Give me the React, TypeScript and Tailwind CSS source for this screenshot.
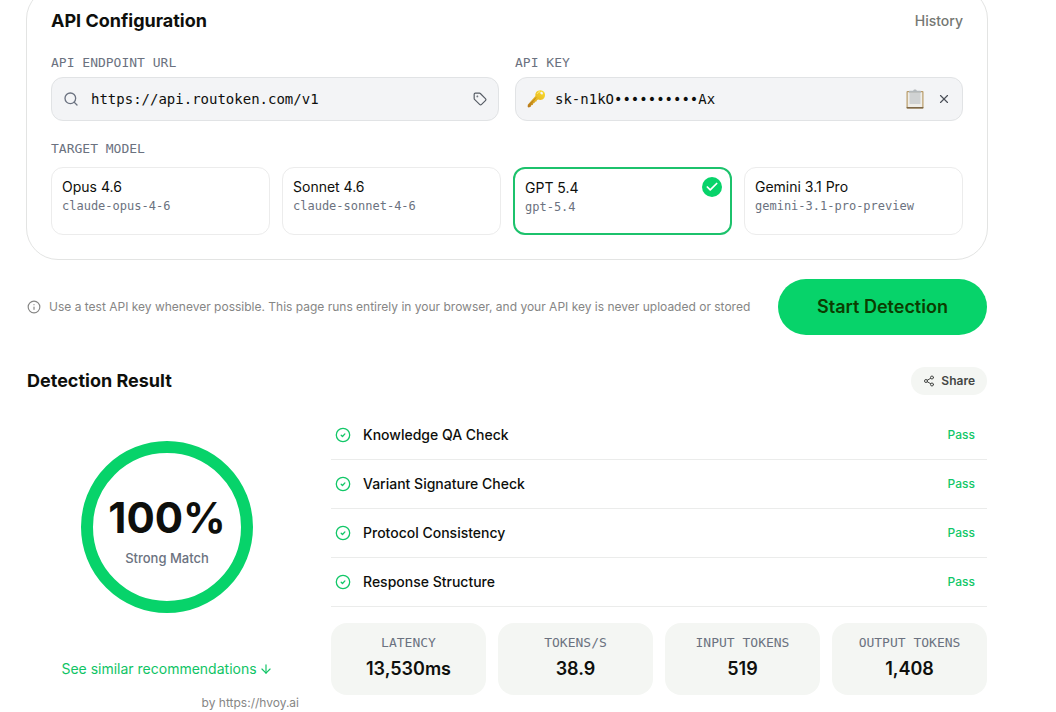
import { ArrowDown, Check, Info, Search, Share2, Tag, X } from 'lucide-react';

interface Model {
    id: string;
    name: string;
}

const models: Model[] = [
    { id: 'claude-opus-4-6', name: 'Opus 4.6' },
    { id: 'claude-sonnet-4-6', name: 'Sonnet 4.6' },
    { id: 'gpt-5.4', name: 'GPT 5.4' },
    { id: 'gemini-3.1-pro-preview', name: 'Gemini 3.1 Pro' },
];

const checks = ['Knowledge QA Check', 'Variant Signature Check', 'Protocol Consistency', 'Response Structure'];

const stats = [
    { label: 'LATENCY', value: '13,530ms' },
    { label: 'TOKENS/S', value: '38.9' },
    { label: 'INPUT TOKENS', value: '519' },
    { label: 'OUTPUT TOKENS', value: '1,408' },
];

const mono = "font-['DejaVu_Sans_Mono',monospace]";
const labelClass = `${mono} text-[13px] leading-4 text-[#6b7280]`;
const fieldClass = 'mt-1.5 flex h-11 items-center rounded-xl border border-[#e1e3e5] bg-[#f3f4f6] px-[11px]';
const inputClass = `${mono} min-w-0 flex-1 bg-transparent text-sm text-[#0e0f0c] outline-none`;

function KeyIcon() {
    return (
        <svg className="h-5 w-5 shrink-0" viewBox="0 0 20 20" aria-hidden="true">
            <defs>
                <linearGradient id="key" x1="0.9" y1="0" x2="0.1" y2="1">
                    <stop offset="0" stopColor="#f9dc2b" />
                    <stop offset="0.5" stopColor="#e8b923" />
                    <stop offset="1" stopColor="#b97a1c" />
                </linearGradient>
            </defs>
            <path
                fill="url(#key)"
                fillRule="evenodd"
                d="M9.300 3.100c1.500-2 4.600-2.600 6.700-1.200 2.200 1.400 2.700 4.500 1.300 6.800-1.300 2-3.700 2.800-6 1.900l-1.300.3-.6 1.500-1.400.3-.5 1.400-1.400.3-.3 1.500-1.600.4-.5 1.500-2 .8-1-.6.1-2.300 7.600-8.600c-.2-1.500.1-2.900.9-4Zm4.900-.3c-.9.2-1.200 1.300-.6 2 .6.8 1.800.9 2.200.1.500-1-.4-2.300-1.600-2.100Z"
            />
            <path d="M9.100 8.400 1.700 16.900" stroke="#b57c1a" strokeWidth="0.8" />
            <path d="M10.200 4.700c.6-1.300 1.600-1.900 2.700-1.900" fill="none" stroke="#fff3a0" strokeWidth="0.9" />
        </svg>
    );
}

function ClipboardIcon() {
    return (
        <svg className="h-5 w-5" viewBox="0 0 20 20" aria-hidden="true">
            <rect x="1.500" y="2" width="17" height="17.500" rx="1" fill="#b99b68" />
            <rect x="1.500" y="18" width="17" height="1.500" rx="0.700" fill="#7d6748" />
            <rect x="2.700" y="3.200" width="14.600" height="14.800" fill="#efede8" />
            <path d="M4.500 4h11v11h-11z" fill="#d0d2d3" />
            <path d="M4 3.800V2.400c0-.3.300-.6.600-.6h3.500C8.400 1 9.100.6 10 .6s1.600.4 1.900 1.200h3.500c.3 0 .6.300.6.600v1.400H4Z" fill="#b3b8bb" />
        </svg>
    );
}

function PassIcon() {
    return (
        <svg
            className="mr-3 h-4 w-4 shrink-0 text-[#12c768]"
            viewBox="0 0 16 16"
            fill="none"
            stroke="currentColor"
            strokeWidth="1.3"
            strokeLinecap="round"
            strokeLinejoin="round"
            aria-hidden="true"
        >
            <circle cx="8" cy="8" r="6.700" />
            <path d="m6.200 8.200 1.300 1.300 2.400-2.600" />
        </svg>
    );
}

export default function App() {
    return (
        <main className="-mt-[13px] bg-white pr-[68px] pl-[26px] font-['Inter',sans-serif] text-[#0e0f0c]">
            <section className="rounded-[32px] border border-[#e3e4e3] p-6 pt-[21px]">
                <div className="flex h-6 items-center justify-between">
                    <h2 className="text-lg font-bold">API Configuration</h2>
                    <button type="button" className="text-sm font-medium text-[#757873]">
                        History
                    </button>
                </div>

                <div className="mt-[22px] grid grid-cols-2 gap-4">
                    <div>
                        <label htmlFor="endpoint" className={`${labelClass} block`}>
                            API ENDPOINT URL
                        </label>
                        <div className={fieldClass}>
                            <Search className="mr-3 h-4 w-4 shrink-0 text-[#6b7280]" strokeWidth={2} />
                            <input id="endpoint" type="text" defaultValue="https://api.routoken.com/v1" className={inputClass} />
                            <button type="button" aria-label="Presets" className="text-[#555b64]">
                                <Tag className="h-3.5 w-3.5" strokeWidth={2} />
                            </button>
                        </div>
                    </div>
                    <div>
                        <label htmlFor="apikey" className={`${labelClass} block`}>
                            API KEY
                        </label>
                        <div className={fieldClass}>
                            <span className="mr-2">
                                <KeyIcon />
                            </span>
                            <input id="apikey" type="text" defaultValue="sk-n1kO••••••••••Ax" className={inputClass} />
                            <button type="button" aria-label="Paste key">
                                <ClipboardIcon />
                            </button>
                            <button type="button" aria-label="Clear key" className="ml-3 text-[#4b5058]">
                                <X className="h-3.5 w-3.5" strokeWidth={2} />
                            </button>
                        </div>
                    </div>
                </div>

                <p className={`${labelClass} mt-5`}>TARGET MODEL</p>
                <div className="mt-2.5 grid grid-cols-4 gap-3">
                    {models.map((model) => {
                        const selected = model.id === 'gpt-5.4';

                        return (
                            <button
                                key={model.id}
                                type="button"
                                aria-pressed={selected}
                                className={`relative flex h-[68px] flex-col items-start rounded-xl px-2.5 pt-2.5 text-left ${
                                    selected ? 'border-2 border-[#1cc26c]' : 'border border-[#ececec]'
                                }`}
                            >
                                <span className="text-sm leading-[18px]">{model.name}</span>
                                <span className={`${mono} text-xs leading-5 text-[#6b7280]`}>{model.id}</span>
                                {selected && (
                                    <span className="absolute top-2 right-2 flex h-5 w-5 items-center justify-center rounded-full bg-[#07d36a] text-white">
                                        <Check className="h-3.5 w-3.5" strokeWidth={3} />
                                    </span>
                                )}
                            </button>
                        );
                    })}
                </div>
            </section>

            <div className="mt-[19px] flex items-center justify-between px-px">
                <p className="flex items-center gap-2 text-xs text-[#868685]">
                    <Info className="h-3.5 w-3.5 shrink-0" strokeWidth={2} />
                    Use a test API key whenever possible. This page runs entirely in your browser, and your API key is never uploaded or stored
                </p>
                <button type="button" className="h-14 w-[209px] shrink-0 rounded-full bg-[#07d36a] text-lg font-semibold text-[#0b3d00]">
                    Start Detection
                </button>
            </div>

            <section className="mt-8 px-px">
                <div className="flex items-center justify-between">
                    <h2 className="text-lg font-bold">Detection Result</h2>
                    <button type="button" className="flex h-7 items-center gap-1.5 rounded-full bg-[#f4f6f3] px-3 text-xs font-semibold text-[#454745]">
                        <Share2 className="h-3 w-3" strokeWidth={2} />
                        Share
                    </button>
                </div>

                <div className="mt-4 flex gap-6">
                    <div className="flex w-[280px] shrink-0 flex-col items-center pt-[30px]">
                        <div className="flex h-[172px] w-[172px] flex-col items-center justify-center rounded-full border-[12px] border-[#07d36a] pt-2.5">
                            <span className="text-[42px] leading-[44px] font-bold">100%</span>
                            <span className="mt-2 text-[13px] leading-5 font-medium text-[#6b7280]">Strong Match</span>
                        </div>
                        <a href="#recommendations" className="mt-[46px] flex items-center gap-0.5 text-sm text-[#0fc465]">
                            See similar recommendations
                            <ArrowDown className="h-3.5 w-3.5" strokeWidth={2} />
                        </a>
                        <p className="mt-4 self-end pr-2 text-xs text-[#868685]">by https://hvoy.ai</p>
                    </div>

                    <div className="min-w-0 flex-1">
                        <ul>
                            {checks.map((check) => (
                                <li key={check} className="flex h-[49px] items-center border-b border-[#ebeceb] pr-3 pl-1">
                                    <PassIcon />
                                    <span className="flex-1 text-sm font-medium">{check}</span>
                                    <span className="text-xs font-medium text-[#12c768]">Pass</span>
                                </li>
                            ))}
                        </ul>
                        <dl className="mt-4 grid grid-cols-4 gap-3">
                            {stats.map((stat) => (
                                <div key={stat.label} className="h-[72px] rounded-2xl bg-[#f4f6f3] pt-3 text-center">
                                    <dt className={labelClass}>{stat.label}</dt>
                                    <dd className="mt-1 text-lg leading-7 font-semibold">{stat.value}</dd>
                                </div>
                            ))}
                        </dl>
                    </div>
                </div>
            </section>
        </main>
    );
}
